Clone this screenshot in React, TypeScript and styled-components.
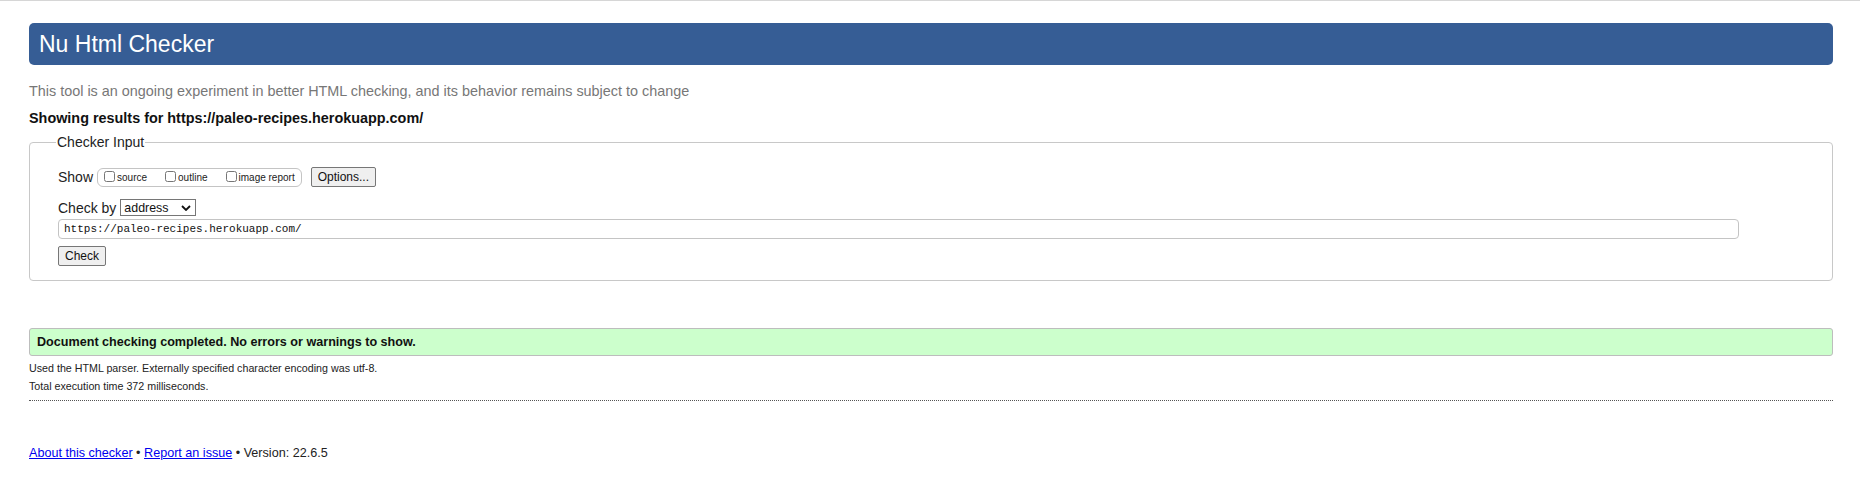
import React from "react";
import styled, { createGlobalStyle } from "styled-components";

const Global = createGlobalStyle`
  html, body { margin: 0; padding: 0; background: #fff; }
  body {
    border-top: 1px solid #d6d6d6;
    font-family: "Liberation Sans", Arial, sans-serif;
    font-size: 14px;
    color: #222;
  }
`;

const Page = styled.div`
  padding: 22px 27px 0 29px;
`;

const Header = styled.h1`
  margin: 0;
  height: 42px;
  display: flex;
  align-items: center;
  padding: 0 10px;
  background: #365d95;
  color: #fff;
  border-radius: 5px;
  font-size: 23px;
  font-weight: normal;
`;

const Intro = styled.p`
  margin: 17px 0 0;
  font-size: 14.4px;
  color: #777;
  line-height: 18px;
`;

const Results = styled.p`
  margin: 10px 0 0;
  font-size: 14.4px;
  font-weight: bold;
  color: #111;
  line-height: 16px;
`;

const Fieldset = styled.fieldset`
  margin: 8px 0 0;
  padding: 17px 28px 14px 28px;
  border: 1px solid #c8c8c8;
  border-radius: 4px;
`;

const Legend = styled.legend`
  padding: 0 1px;
  margin-left: -2px;
  font-size: 14px;
  line-height: 16px;
  color: #222;
`;

const Row = styled.div<{ $gap?: number }>`
  display: flex;
  align-items: center;
  margin-top: ${(p) => p.$gap ?? 0}px;
`;

const Label = styled.span`
  font-size: 14px;
  line-height: 16px;
  margin-right: 4px;
`;

const Group = styled.div`
  display: flex;
  align-items: center;
  height: 17px;
  border: 1px solid #c4c4c4;
  border-radius: 6px;
  padding: 0 6px 0 6px;
  gap: 18px;
`;

const CheckLabel = styled.label`
  display: flex;
  align-items: center;
  font-size: 10px;
  color: #222;
`;

const Box = styled.input`
  width: 11px;
  height: 11px;
  margin: 0 2px 2px 0;
`;

const Button = styled.button<{ $ml?: number }>`
  font-family: "Liberation Sans", Arial, sans-serif;
  font-size: 12px;
  height: 20px;
  padding: 0 6px;
  background: #efefef;
  border: 1px solid #767676;
  border-radius: 2px;
  color: #111;
  margin-left: ${(p) => p.$ml ?? 0}px;
`;

const SelectWrap = styled.div`
  position: relative;
  display: inline-flex;
`;

const Select = styled.select`
  appearance: none;
  -webkit-appearance: none;
  font-family: "Liberation Sans", Arial, sans-serif;
  font-size: 12.4px;
  height: 17px;
  width: 76px;
  padding: 0 0 0 3px;
  border: 1px solid #767676;
  border-radius: 0;
  background: #fff;
  color: #111;
`;

const Chevron = styled.svg`
  position: absolute;
  right: 5px;
  top: 6px;
  pointer-events: none;
`;

const UrlInput = styled.input`
  display: block;
  box-sizing: border-box;
  width: calc(100% - 65px);
  height: 20px;
  margin-top: 3px;
  padding: 0 5px;
  font-family: "Liberation Mono", "DejaVu Sans Mono", monospace;
  font-size: 11px;
  border: 1px solid #c4c4c4;
  border-radius: 4px;
  color: #111;
`;

const Success = styled.div`
  margin-top: 47px;
  box-sizing: border-box;
  height: 28px;
  display: flex;
  align-items: center;
  padding: 0 7px;
  background: #ccffcc;
  border: 1px solid #bdbdbd;
  border-radius: 3px;
  font-size: 12.6px;
  font-weight: bold;
  color: #111;
`;

const Details = styled.div`
  margin-top: 3px;
  padding-bottom: 5px;
  border-bottom: 1px dotted #555;
`;

const Detail = styled.p`
  margin: 0;
  font-size: 10.7px;
  line-height: 18px;
  color: #222;
`;

const Footer = styled.p`
  margin: 45px 0 0;
  font-size: 12.6px;
  color: #222;
  a { color: #0000ee; }
`;

export default function App() {
  return (
    <>
      <Global />
      <Page>
        <Header>Nu Html Checker</Header>
        <Intro>
          This tool is an ongoing experiment in better HTML checking, and its behavior remains subject to change
        </Intro>
        <Results>Showing results for https://paleo-recipes.herokuapp.com/</Results>
        <Fieldset>
          <Legend>Checker Input</Legend>
          <Row>
            <Label>Show</Label>
            <Group>
              <CheckLabel>
                <Box type="checkbox" />
                source
              </CheckLabel>
              <CheckLabel>
                <Box type="checkbox" />
                outline
              </CheckLabel>
              <CheckLabel>
                <Box type="checkbox" />
                image report
              </CheckLabel>
            </Group>
            <Button $ml={9}>Options...</Button>
          </Row>
          <Row $gap={12}>
            <Label>Check by</Label>
            <SelectWrap>
              <Select defaultValue="address">
                <option value="address">address</option>
              </Select>
              <Chevron width="10" height="6" viewBox="0 0 10 6">
                <path d="M1 1 L5 5 L9 1" fill="none" stroke="#111" strokeWidth="1.8" />
              </Chevron>
            </SelectWrap>
          </Row>
          <UrlInput defaultValue="https://paleo-recipes.herokuapp.com/" />
          <Row $gap={7}>
            <Button>Check</Button>
          </Row>
        </Fieldset>
        <Success>Document checking completed. No errors or warnings to show.</Success>
        <Details>
          <Detail>Used the HTML parser. Externally specified character encoding was utf-8.</Detail>
          <Detail>Total execution time 372 milliseconds.</Detail>
        </Details>
        <Footer>
          <a href="#">About this checker</a> • <a href="#">Report an issue</a> • Version: 22.6.5
        </Footer>
      </Page>
    </>
  );
}
